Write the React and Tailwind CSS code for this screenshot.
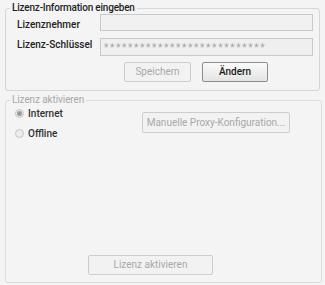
import { useState } from 'react'

const FONT = "font-['Roboto','Liberation_Sans',Arial,sans-serif]"

function Radio({ checked, label }) {
  return (
    <label className="flex items-center h-[13px]">
      <span className="w-[9px] h-[9px] rounded-full border border-[#c4c4c4] bg-[#ececec] flex items-center justify-center shrink-0">
        {checked && <span className="w-[5px] h-[5px] rounded-full bg-[#9a9a9a]" />}
      </span>
      <span className="ml-[4px] text-[10px] font-medium text-[#333] leading-[13px]">{label}</span>
    </label>
  )
}

function Button({ children, disabled, className }) {
  return (
    <button
      className={
        'h-[20px] rounded-[2px] border text-[10px] leading-none whitespace-nowrap ' +
        (disabled
          ? 'border-[#cdcdcd] bg-[#f2f2f2] text-[#a8a8a8] '
          : 'border-[#8e8e8e] bg-gradient-to-b from-[#fafafa] to-[#e4e4e4] text-[#1a1a1a] font-medium ') +
        className
      }
    >
      {children}
    </button>
  )
}

export default function App() {
  const [mode, setMode] = useState('internet')

  return (
    <div className={'w-[325px] h-[285px] bg-[#f4f4f4] pt-[2px] ' + FONT}>
      {/* Lizenz-Information */}
      <fieldset className="ml-[5px] w-[315px] h-[89px] border border-[#d6d6d6] rounded-[3px]">
        <legend className="ml-[4px] px-[2px] text-[10px] font-medium tracking-[-0.2px] leading-[12px] text-[#1f1f1f]">
          Lizenz-Information eingeben
        </legend>
        <div className="flex items-start h-[17px]">
          <span className="w-[94px] pl-[11px] pt-[5px] text-[10px] font-medium leading-[12px] text-[#222]">Lizenznehmer</span>
          <div className="w-[213px] h-[17px] border border-[#c9c9c9] bg-[#f1f1f1]" />
        </div>
        <div className="flex items-start h-[18px] mt-[7px]">
          <span className="w-[94px] pl-[11px] pt-[1px] text-[10px] font-medium leading-[12px] text-[#222]">Lizenz-Schlüssel</span>
          <div className="w-[213px] h-[18px] border border-[#c9c9c9] bg-[#efefef] flex items-center pl-[3px] overflow-hidden">
            <span className="text-[10px] text-[#a5a5a5] tracking-[1.7px] leading-none mt-[1px] whitespace-nowrap">
              ***************************
            </span>
          </div>
        </div>
        <div className="flex mt-[6px] pl-[118px] gap-[11px]">
          <Button disabled className="w-[67px]">Speichern</Button>
          <Button className="w-[66px]">Ändern</Button>
        </div>
      </fieldset>

      {/* Lizenz aktivieren */}
      <fieldset className="ml-[5px] mt-[3px] w-[317px] h-[189px] border border-[#dcdcdc] rounded-[3px]">
        <legend className="ml-[4px] px-[2px] text-[10px] tracking-[-0.1px] leading-[12px] text-[#a8a8a8]">
          Lizenz aktivieren
        </legend>
        <div className="flex">
          <div className="flex flex-col gap-[7px] pl-[9px] pt-[1px]" onClick={() => setMode(mode)}>
            <Radio checked={mode === 'internet'} label="Internet" />
            <Radio checked={mode === 'offline'} label="Offline" />
          </div>
          <Button disabled className="ml-[79px] mt-[6px] w-[148px] !h-[21px]">
            Manuelle Proxy-Konfiguration...
          </Button>
        </div>
        <div className="pl-[82px] mt-[111px]">
          <Button disabled className="w-[125px]">Lizenz aktivieren</Button>
        </div>
      </fieldset>
    </div>
  )
}
